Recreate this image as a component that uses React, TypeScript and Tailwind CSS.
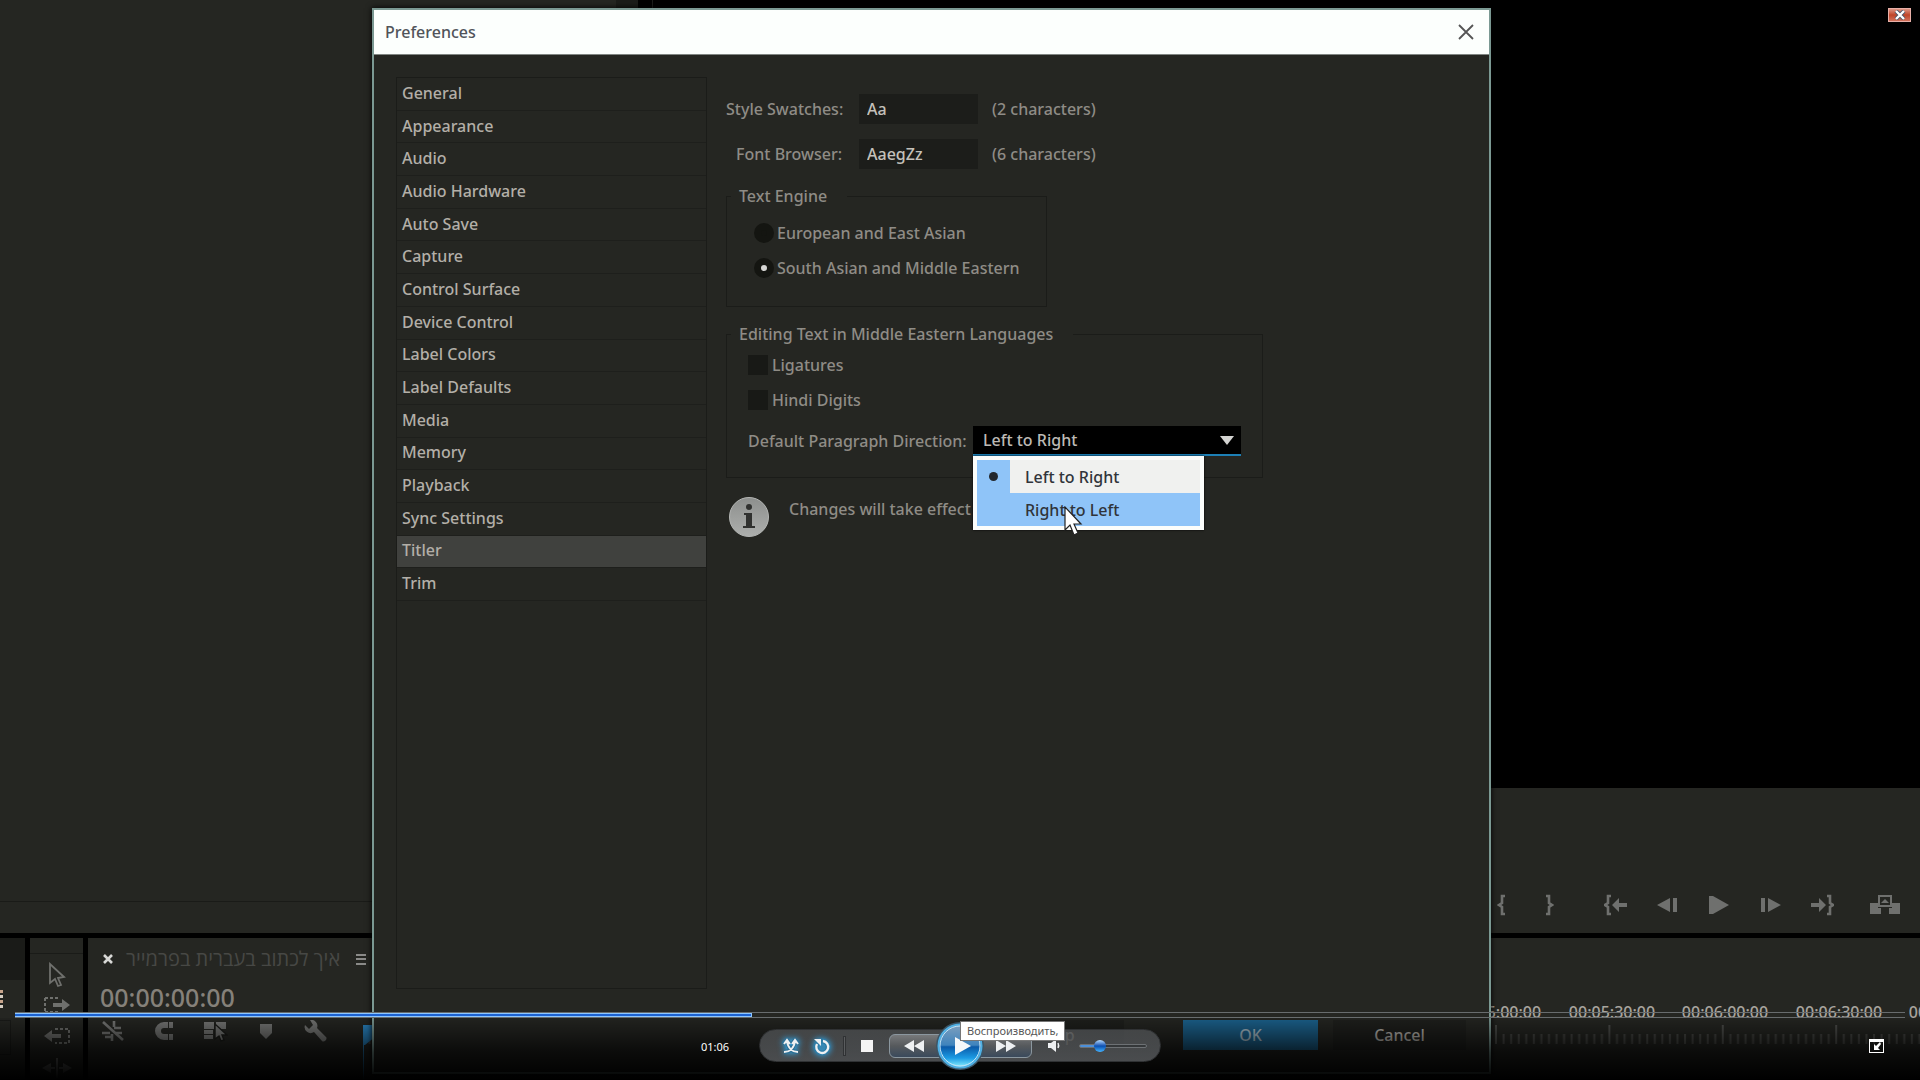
import { useState } from "react";
import type { ReactNode } from "react";
import clsx from "clsx";

const categories = [
  "General",
  "Appearance",
  "Audio",
  "Audio Hardware",
  "Auto Save",
  "Capture",
  "Control Surface",
  "Device Control",
  "Label Colors",
  "Label Defaults",
  "Media",
  "Memory",
  "Playback",
  "Sync Settings",
  "Titler",
  "Trim",
];

const directions = ["Left to Right", "Right to Left"];

const engines = ["European and East Asian", "South Asian and Middle Eastern"];

// one label every 30 seconds, the visible stretch starts at five minutes
const rulerLabels = [10, 11, 12, 13, 14].map((step) => {
  const minutes = String(Math.floor(step / 2)).padStart(2, "0");
  return { step, text: `00:${minutes}:${step % 2 ? "30" : "00"}:00` };
});

interface IconProps {
  w: number;
  h: number;
  className?: string;
  children: ReactNode;
}

function Icon({ w, h, className, children }: IconProps) {
  return (
    <svg
      width={w}
      height={h}
      viewBox={`0 0 ${w} ${h}`}
      fill="currentColor"
      className={clsx("shrink-0", className)}
      aria-hidden="true"
    >
      {children}
    </svg>
  );
}

/* ---------- Editor behind the dialog ---------- */

function ToolsPanel() {
  return (
    <div className="w-[53px] shrink-0 bg-[#252622] pt-[15px]">
      <div className="flex flex-col items-center border-t border-[#1a1b18] pt-2 text-[#6f706d]">
        <button type="button" aria-label="Selection tool">
          <Icon w={22} h={26}>
            <path
              d="M4 2v19l5-4 3 7 3-1-3-7 6-1z"
              fill="none"
              stroke="currentColor"
              strokeWidth="1.8"
            />
          </Icon>
        </button>
        <button type="button" aria-label="Track select forward" className="mt-2">
          <Icon w={28} h={18}>
            <path d="M2 2h14M2 16h14M2 2v14" fill="none" stroke="currentColor" strokeWidth="2" strokeDasharray="3 2" />
            <path d="M10 7h9V3l8 6-8 6v-4h-9z" />
          </Icon>
        </button>
        <button type="button" aria-label="Track select backward" className="mt-[13px]">
          <Icon w={28} h={18}>
            <path d="M12 2h14v14H12" fill="none" stroke="currentColor" strokeWidth="2" strokeDasharray="3 2" />
            <path d="M18 7H9V3L1 9l8 6v-4h9z" />
          </Icon>
        </button>
        <button type="button" aria-label="Ripple edit" className="mt-[13px]">
          <Icon w={30} h={20}>
            <path d="M14 0h2v20h-2zM0 10l9-5v4h4v2H9v4zM30 10l-9-5v4h-4v2h4v4z" />
          </Icon>
        </button>
      </div>
    </div>
  );
}

function TimelinePanel() {
  return (
    <section className="flex min-w-0 flex-1 bg-[#252622]">
      <div className="flex w-[275px] shrink-0 flex-col pt-2">
        <div className="flex h-[26px] items-center pl-[15px]">
          <button type="button" aria-label="Close sequence" className="text-[#d8d8d6]">
            <Icon w={10} h={10}>
              <path d="M1 1l8 8M9 1l-8 8" stroke="currentColor" strokeWidth="2.6" />
            </Icon>
          </button>
          <span
            dir="rtl"
            className="ml-[13px] w-[216px] text-right text-xl leading-6 whitespace-nowrap text-[#474845]"
          >
            איך לכתוב בעברית בפרמייר
          </span>
          <button type="button" aria-label="Panel menu" className="ml-4 text-[#8a8a88]">
            <Icon w={10} h={13}>
              <path d="M0 1h10v2H0zM0 5h10v2H0zM0 10h10v2H0z" />
            </Icon>
          </button>
        </div>
        <div className="mt-[9px] pl-3 text-[25px] leading-8 font-medium text-[#85817a]">
          00:00:00:00
        </div>
        <div className="mt-[7px] flex items-center pl-[13px] text-[#777876]">
          <button type="button" aria-label="Insert as nest">
            <Icon w={24} h={22}>
              <path d="M2 2l20 18" stroke="currentColor" strokeWidth="2.6" />
              <path d="M13 1v6M11 14v7M1 13h8M13 8h7M15 13h6M4 17h6" stroke="currentColor" strokeWidth="2.6" />
            </Icon>
          </button>
          <button type="button" aria-label="Snap" className="ml-7">
            <Icon w={22} h={20}>
              <path d="M11 1h4v6h-4a3 3 0 0 0 0 6h4v6h-4A9 9 0 0 1 11 1zM16 1h4v6h-4zM16 13h4v6h-4z" />
            </Icon>
          </button>
          <button type="button" aria-label="Linked selection" className="ml-[29px]">
            <Icon w={24} h={22}>
              <path d="M0 2h10v7H0zM12 2h10v7H12zM0 10h9v4H0zM0 15h9v4H0z" />
              <path d="M11 4v15l4-3 2 5 3-1-2-5h5z" stroke="#1a1b18" strokeWidth="1.4" />
            </Icon>
          </button>
          <button type="button" aria-label="Add marker" className="ml-8">
            <Icon w={12} h={16}>
              <path d="M0 1h12v9l-6 6-6-6z" />
            </Icon>
          </button>
          <button type="button" aria-label="Timeline settings" className="ml-8">
            <Icon w={24} h={22}>
              <path d="M6 0a6 6 0 0 1 7 8l9 9c2 2-2 6-4 4l-8-9A6 6 0 0 1 1 5l4 4 4-4z" />
            </Icon>
          </button>
        </div>
      </div>

      <div className="relative min-w-0 flex-1 overflow-hidden">
        {rulerLabels.map(({ step, text }) => (
          <span
            key={text}
            className="absolute top-16 -translate-x-1/2 text-base leading-5 font-medium text-[#a8a49e]"
            style={{ left: Math.round(step * 113.5) }}
          >
            {text}
          </span>
        ))}
        <svg className="absolute top-[87px] left-0 h-5 w-full" aria-hidden="true">
          <defs>
            <pattern id="ticks" width="113.4" height="20" x="-2" patternUnits="userSpaceOnUse">
              <path d="M1 0v19" stroke="#4c4d4a" strokeWidth="2" />
              {Array.from({ length: 14 }, (_, i) => (
                <path key={i} d={`M${8.6 + i * 7.56} 9v10`} stroke="#464744" strokeWidth="2" />
              ))}
            </pattern>
          </defs>
          <rect width="100%" height="20" fill="url(#ticks)" />
          <path d="M0 0h12v12L2 20H0z" fill="#2a86c4" />
        </svg>
        <div className="absolute top-[106px] left-0 h-9 w-px bg-[#2a86c4]" />
      </div>
    </section>
  );
}

function MonitorControls() {
  return (
    <div className="flex h-8 items-center justify-end pr-5 text-[#6f706e]">
      <button type="button" aria-label="Mark in">
        <Icon w={10} h={22}>
          <path d="M8 2H5v7l-3 2 3 2v7h3" fill="none" stroke="currentColor" strokeWidth="2.6" />
        </Icon>
      </button>
      <button type="button" aria-label="Mark out" className="ml-[37px]">
        <Icon w={10} h={22}>
          <path d="M2 2h3v7l3 2-3 2v7H2" fill="none" stroke="currentColor" strokeWidth="2.6" />
        </Icon>
      </button>
      <button type="button" aria-label="Go to in" className="ml-[50px]">
        <Icon w={24} h={22}>
          <path d="M7 2H4v7l-3 2 3 2v7h3" fill="none" stroke="currentColor" strokeWidth="2.6" />
          <path d="M8 11l7-7v5h8v4h-8v5z" />
        </Icon>
      </button>
      <button type="button" aria-label="Step back" className="ml-[29px]">
        <Icon w={20} h={16}>
          <path d="M0 8l13-7v14zM16 1h4v14h-4z" />
        </Icon>
      </button>
      <button type="button" aria-label="Play" className="ml-8">
        <Icon w={20} h={18}>
          <path d="M0 0h4l16 9-16 9H0z" />
        </Icon>
      </button>
      <button type="button" aria-label="Step forward" className="ml-8">
        <Icon w={20} h={16}>
          <path d="M20 8L7 1v14zM0 1h4v14H0z" />
        </Icon>
      </button>
      <button type="button" aria-label="Go to out" className="ml-[29px]">
        <Icon w={24} h={22}>
          <path d="M17 2h3v7l3 2-3 2v7h-3" fill="none" stroke="currentColor" strokeWidth="2.6" />
          <path d="M16 11L9 4v5H1v4h8v5z" />
        </Icon>
      </button>
      <button type="button" aria-label="Lift" className="ml-9">
        <Icon w={30} h={20}>
          <path d="M0 8h8v5h3v6H0zM30 8h-8v5h-3v6h11z" />
          <path d="M9 1h12v10H9z" fill="none" stroke="currentColor" strokeWidth="2" />
          <path d="M15 4l4 4h-8z" />
        </Icon>
      </button>
    </div>
  );
}

function Editor() {
  return (
    <div className="flex h-full flex-col gap-[5px] bg-black">
      <div className="flex min-h-0 flex-1">
        <div className="flex w-[616px] flex-col bg-[#252622]">
          <div className="flex-1 border-b border-[#1a1b18]" />
          <div className="h-[31px]" />
        </div>
        <div className="w-[22px] bg-[#1b1c19]" />
        <div className="ml-[14px] flex flex-1 flex-col border-l border-[#1d1e1b]">
          <div className="flex-1" />
          <div className="flex h-[145px] flex-col bg-[#252622] pt-[101px]">
            <MonitorControls />
          </div>
        </div>
      </div>

      <div className="flex h-[142px] gap-[5px]">
        <div className="flex w-[25px] shrink-0 flex-col bg-[#252622]">
          <div className="h-[42px] bg-[#1a1b18]" />
          <div className="mt-[10px] flex h-[18px] w-[3px] flex-col justify-between">
            <span className="h-[3px] bg-[#c9a58c]" />
            <span className="h-[3px] bg-[#d8cfc4]" />
            <span className="h-[3px] bg-[#c9a58c]" />
            <span className="h-[3px] bg-[#d8cfc4]" />
          </div>
          <div className="mt-3 h-[35px] w-[11px] border-y border-r border-[#1a1b18]" />
        </div>
        <ToolsPanel />
        <TimelinePanel />
      </div>
    </div>
  );
}

/* ---------- Preferences dialog ---------- */

interface GroupProps {
  title: string;
  className?: string;
  children: ReactNode;
}

function Group({ title, className, children }: GroupProps) {
  return (
    <fieldset className={clsx("mt-[15px] border border-[#1b1c19] pb-[21px]", className)}>
      <legend className="ml-1 pr-5 pl-2 leading-6">{title}</legend>
      {children}
    </fieldset>
  );
}

function DirectionMenu({ value, onSelect }: { value: string; onSelect: (v: string) => void }) {
  return (
    <div
      role="listbox"
      aria-label="Paragraph direction"
      className="absolute top-full left-0 z-10 w-[231px] border-4 border-[#fbfdfb] bg-[#f0f1ef] text-[#30343a] shadow-[0_0_2px_#000]"
    >
      {directions.map((direction) => (
        <button
          key={direction}
          type="button"
          role="option"
          aria-selected={direction === value}
          onClick={() => onSelect(direction)}
          className={clsx(
            "flex h-[33px] w-full items-center text-left",
            direction === "Right to Left" && "bg-[#8fc4f8]"
          )}
        >
          <span className="flex h-full w-[33px] items-center justify-center bg-[#8fc4f8]">
            {direction === value && <span className="size-[9px] rounded-full bg-[#23282e]" />}
          </span>
          <span className="ml-[15px]">{direction}</span>
        </button>
      ))}
      {/* Pointer */}
      <Icon w={20} h={32} className="pointer-events-none absolute top-[46px] left-[87px]">
        <path d="M1 1v23l5-5 4 10 4-2-4-9h7z" fill="#fff" stroke="#222" strokeWidth="1.2" />
      </Icon>
    </div>
  );
}

function PreferencesDialog() {
  const [category, setCategory] = useState("Titler");
  const [engine, setEngine] = useState(engines[1]);
  const [direction, setDirection] = useState(directions[0]);

  return (
    <div
      role="dialog"
      aria-labelledby="dialog-title"
      className="absolute top-2 right-[429px] bottom-[6px] left-[372px] flex flex-col border-2 border-[#7b9993] bg-[#252622] text-base font-medium text-[#8f8c86] shadow-[0_0_6px_#000]"
    >
      <header className="flex h-[45px] shrink-0 items-center justify-between border-b border-[#808582] bg-[#fcfffd] pr-[15px] pl-[11px]">
        <h1 id="dialog-title" className="text-[#50545a]">
          Preferences
        </h1>
        <button type="button" aria-label="Close" className="text-[#555]">
          <Icon w={16} h={16}>
            <path d="M1 1l14 14M15 1L1 15" stroke="currentColor" strokeWidth="1.8" />
          </Icon>
        </button>
      </header>

      <div className="flex min-h-0 flex-1 px-[22px] pt-[22px]">
        {/* Categories */}
        <nav className="w-[311px] shrink-0 border border-[#1b1c19]">
          <ul className="grid h-[523px] auto-rows-fr">
            {categories.map((name) => (
              <li key={name} className="border-b border-[#1e1f1c]">
                <button
                  type="button"
                  onClick={() => setCategory(name)}
                  className={clsx(
                    "flex h-full w-full items-center pb-[2px] pl-[5px] text-left text-[#b3afa8]",
                    name === category && "bg-[#40413e]"
                  )}
                >
                  {name}
                </button>
              </li>
            ))}
          </ul>
        </nav>

        {/* Titler settings */}
        <div className="min-w-0 flex-1 pt-[17px] pl-[19px]">
          <div className="flex flex-col gap-[15px]">
            <div className="flex h-[30px] items-center">
              <label htmlFor="swatches" className="w-[116px] text-right whitespace-nowrap">
                Style Swatches:
              </label>
              <input
                id="swatches"
                defaultValue="Aa"
                className="ml-[17px] h-full w-[119px] bg-[#1c1d1a] pl-2 text-[#c4c1bb] outline-none"
              />
              <span className="ml-[14px]">(2 characters)</span>
            </div>
            <div className="flex h-[30px] items-center">
              <label htmlFor="browser" className="w-[116px] text-right whitespace-nowrap">
                Font Browser:
              </label>
              <input
                id="browser"
                defaultValue="AaegZz"
                className="ml-[17px] h-full w-[119px] bg-[#1c1d1a] pl-2 text-[#c4c1bb] outline-none"
              />
              <span className="ml-[14px]">(6 characters)</span>
            </div>
          </div>

          <Group title="Text Engine" className="w-[321px]">
            <div className="pt-[7px] pl-[27px]">
              {engines.map((name) => (
                <label key={name} className="flex h-[35px] items-center gap-[3px] whitespace-nowrap">
                  <input
                    type="radio"
                    name="engine"
                    checked={engine === name}
                    onChange={() => setEngine(name)}
                    className="size-5 appearance-none rounded-full border-[7px] border-[#141511] bg-[#141511] checked:bg-[#d6d6d4]"
                  />
                  {name}
                </label>
              ))}
            </div>
          </Group>

          <Group title="Editing Text in Middle Eastern Languages" className="w-[537px]">
            <div className="pt-px pl-[21px]">
              {["Ligatures", "Hindi Digits"].map((name) => (
                <label key={name} className="flex h-[35px] items-center gap-1">
                  <input
                    type="checkbox"
                    className="size-5 appearance-none bg-[#181916] checked:bg-[#d6d6d4]"
                  />
                  {name}
                </label>
              ))}
              <div className="mt-[9px] flex h-[30px] items-center">
                <label htmlFor="direction" className="w-[225px] whitespace-nowrap">
                  Default Paragraph Direction:
                </label>
                <div className="relative h-full w-[268px]">
                  <select
                    id="direction"
                    value={direction}
                    onChange={(e) => setDirection(e.target.value)}
                    className="h-full w-full appearance-none border-b-2 border-[#1d7fb5] bg-black pl-[10px] text-[#bdbab5] outline-none"
                  >
                    {directions.map((name) => (
                      <option key={name}>{name}</option>
                    ))}
                  </select>
                  <Icon
                    w={14}
                    h={9}
                    className="pointer-events-none absolute top-[10px] right-[7px] text-[#d4d4d2]"
                  >
                    <path d="M0 0h14L7 9z" />
                  </Icon>
                  <DirectionMenu value={direction} onSelect={setDirection} />
                </div>
              </div>
            </div>
          </Group>

          <div className="mt-[19px] flex items-start gap-5 pl-[3px]">
            <Icon w={40} h={40}>
              <defs>
                <linearGradient id="info" x1="0" y1="0" x2="0" y2="1">
                  <stop offset="0" stopColor="#8d8f8d" />
                  <stop offset="1" stopColor="#adafad" />
                </linearGradient>
              </defs>
              <circle cx="20" cy="20" r="19.5" fill="url(#info)" stroke="#b4b6b4" />
              <circle cx="20" cy="10" r="3" fill="#30312f" />
              <path d="M15 16h8v13h3v2H14v-2h3V18h-2z" fill="#30312f" />
            </Icon>
            <p className="leading-6">Changes will take effect</p>
          </div>
        </div>
      </div>

      <footer className="flex justify-end px-[23px] pt-[31px] pb-[22px]">
        <button type="button" className="h-[30px] w-[134px] bg-[#1f201d]">
          Help
        </button>
        <button type="button" className="ml-[59px] h-[30px] w-[135px] bg-[#1c6490] text-[#a9bfcc]">
          OK
        </button>
        <button type="button" className="ml-[15px] h-[30px] w-[133px] bg-[#1f201d] text-[#b9b5af]">
          Cancel
        </button>
      </footer>
    </div>
  );
}

/* ---------- Media player overlay ---------- */

function Player() {
  return (
    <div className="absolute inset-x-0 bottom-0 flex flex-col">
      {/* Seek bar */}
      <div className="mx-[15px] h-[6px] border-y border-[#686c6e]">
        <div className="h-full w-[39%] border-y border-r border-[#8cc6ff] bg-[#1c62d2]" />
      </div>

      <div className="flex h-[62px] items-start bg-linear-to-b from-black/10 via-black/70 via-55% to-black pt-[11px]">
        <div className="flex h-[33px] flex-1 items-center justify-end px-[30px] pt-[3px] text-[11px] text-white">
          01:06
        </div>

        <div className="relative flex h-[33px] w-[402px] shrink-0 items-center rounded-full border border-[#303234] bg-linear-to-b from-[#5a5d60]/65 to-[#606366]/75 text-[#eef0f2]">
          <button type="button" aria-label="Shuffle" className="ml-[22px]">
            <Icon w={18} h={20} className="drop-shadow-[0_0_3px_#2cb4ff]">
              <path
                d="M2 16c5 0 10-3 11-12M16 16c-5 0-10-3-11-12M1 8l4-4 3 4M17 8l-4-4-3 4"
                fill="none"
                stroke="#2c6f94"
                strokeWidth="4"
              />
              <path
                d="M2 16c5 0 10-3 11-11M16 16c-5 0-10-3-11-11M2 8l3-4 3 4M16 8l-3-4-3 4"
                fill="none"
                stroke="currentColor"
                strokeWidth="2"
              />
            </Icon>
          </button>
          <button type="button" aria-label="Repeat" className="ml-[11px]">
            <Icon w={20} h={20} className="drop-shadow-[0_0_3px_#2cb4ff]">
              <circle cx="11" cy="11" r="6" fill="none" stroke="#2c7ba6" strokeWidth="5" />
              <path d="M12 5a6 6 0 1 1-6 3" fill="none" stroke="currentColor" strokeWidth="2.4" />
              <path d="M3 3h7v7z" />
            </Icon>
          </button>
          <span className="ml-3 h-5 w-[3px] border border-[#303234] bg-[#5a5c5e]" />
          <button type="button" aria-label="Stop" className="ml-[15px] size-3 bg-[#f4f4f4]" />

          <div className="ml-4 flex items-center">
            <button
              type="button"
              aria-label="Rewind"
              className="flex h-6 w-[52px] items-center rounded-l-md border border-[#8b979f] bg-linear-to-b from-[#77797b] via-[#56595c] via-50% to-[#3a4a5c] pl-[14px]"
            >
              <Icon w={20} h={12}>
                <path d="M0 6l10-6v12zM10 6l10-6v12z" />
              </Icon>
            </button>
            <span className="w-[39px]" />
            <button
              type="button"
              aria-label="Fast forward"
              className="flex h-6 w-[52px] items-center justify-end rounded-r-md border border-[#8b979f] bg-linear-to-b from-[#77797b] via-[#56595c] via-50% to-[#3a4a5c] pr-[15px]"
            >
              <Icon w={20} h={12}>
                <path d="M10 6L0 0v12zM20 6L10 0v12z" />
              </Icon>
            </button>
          </div>

          <button
            type="button"
            aria-label="Play"
            className="absolute -top-[8px] left-1/2 -translate-x-1/2"
          >
            <Icon w={48} h={48}>
              <defs>
                <linearGradient id="orb" x1="0" y1="0" x2="0" y2="1">
                  <stop offset="0" stopColor="#7f9fbd" />
                  <stop offset="0.48" stopColor="#3f84bd" />
                  <stop offset="0.52" stopColor="#0b5aa8" />
                  <stop offset="0.78" stopColor="#1c9be4" />
                  <stop offset="1" stopColor="#8ff4ff" />
                </linearGradient>
              </defs>
              <circle cx="24" cy="24" r="24" fill="#3c5566" />
              <circle cx="24" cy="24" r="21.5" fill="url(#orb)" stroke="#4fb0e4" strokeWidth="2" />
              <circle cx="24" cy="24" r="20" fill="none" stroke="#c4e4f6" strokeWidth="1" />
              <path d="M19 15l16 9-16 9z" fill="#f6f8fa" />
            </Icon>
          </button>
          <span
            role="tooltip"
            className="absolute -top-[9px] left-1/2 z-10 border border-[#767676] bg-white px-[6px] text-[11px] leading-[18px] whitespace-nowrap text-[#575757]"
          >
            Воспроизводить,
          </span>

          <button type="button" aria-label="Mute" className="ml-4">
            <Icon w={13} h={13}>
              <path d="M0 4h3l5-4v13L3 9H0z" />
              <path d="M10 4c1 2 1 3 0 5" fill="none" stroke="currentColor" strokeWidth="1.5" />
            </Icon>
          </button>
          <input
            type="range"
            aria-label="Volume"
            defaultValue="25"
            className="ml-[18px] h-1 w-[68px] appearance-none rounded-full border border-[#6d7174] bg-linear-to-r from-[#4d8fd8] from-30% to-[#35383a] to-30% [&::-webkit-slider-thumb]:size-3 [&::-webkit-slider-thumb]:appearance-none [&::-webkit-slider-thumb]:rounded-full [&::-webkit-slider-thumb]:bg-linear-to-b [&::-webkit-slider-thumb]:from-[#b8dcff] [&::-webkit-slider-thumb]:via-[#0b4fb0] [&::-webkit-slider-thumb]:to-[#46b4ff]"
          />
        </div>

        <div className="flex h-[33px] flex-1 items-center justify-end px-[30px]">
          <button type="button" aria-label="Exit full screen" className="mr-[6px]">
            <Icon w={15} h={14} className="text-white">
              <path d="M0 0h15v14H0zM1 3v10h13V3z" fillRule="evenodd" />
              <path d="M5 11V5l2 2 4-4 1 2-3 4 2 2z" />
            </Icon>
          </button>
        </div>
      </div>
    </div>
  );
}

export default function App() {
  return (
    <div className="relative h-screen overflow-hidden bg-black font-['Noto_Sans','Open_Sans',sans-serif]">
      <Editor />
      <PreferencesDialog />
      <Player />
      <button
        type="button"
        aria-label="Close player"
        className="absolute top-2 right-[9px] flex h-[14px] w-[23px] items-center justify-center border border-[#e8b0a8] bg-linear-to-b from-[#dc9484] via-[#c04428] via-50% to-[#d0705a]"
      >
        <Icon w={12} h={10}>
          <path d="M2 1l8 8M10 1L2 9" stroke="#4a5468" strokeWidth="4" />
          <path d="M2 1l8 8M10 1L2 9" stroke="#fff" strokeWidth="2.4" />
        </Icon>
      </button>
    </div>
  );
}
